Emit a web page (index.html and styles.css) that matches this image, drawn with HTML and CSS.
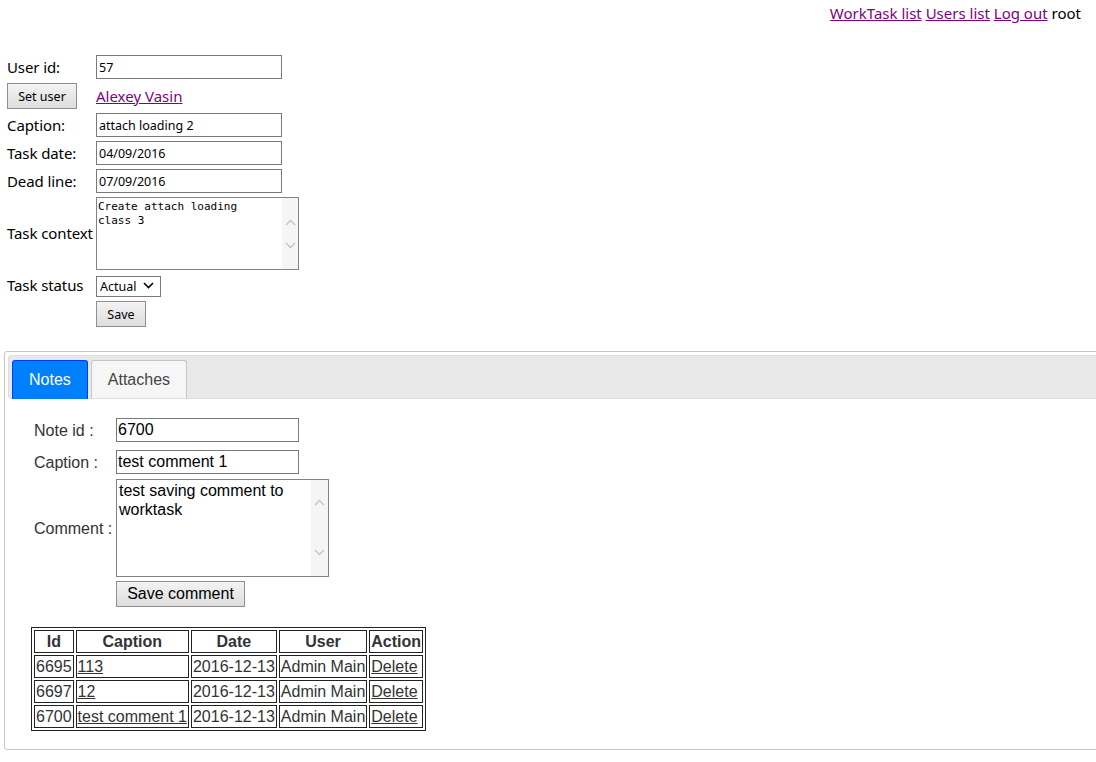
FILE: index.html
```html
<!DOCTYPE html>
<html>
<head>
<meta charset="utf-8">
<title>WorkTask</title>
<link rel="stylesheet" href="styles.css">
</head>
<body>
<div class="topnav"><a href="#">WorkTask list</a> <a href="#">Users list</a> <a href="#">Log out</a> root</div>

<form class="task-form">
  <label class="lbl">User id:</label>
  <input class="txt" type="text" value="57">

  <button type="button" class="btn btn-set">Set user</button>
  <a class="user-link" href="#">Alexey Vasin</a>

  <label class="lbl">Caption:</label>
  <input class="txt" type="text" value="attach loading 2">

  <label class="lbl">Task date:</label>
  <input class="txt" type="text" value="04/09/2016">

  <label class="lbl">Dead line:</label>
  <input class="txt" type="text" value="07/09/2016">

  <label class="lbl">Task context</label>
  <div class="area area-task">
    <textarea class="area-input mono">Create attach loading
class 3</textarea>
    <div class="track">
      <svg width="11" height="7" viewBox="0 0 11 7"><path d="M1 6 L5.5 1.5 L10 6" fill="none" stroke="#c3c3c3" stroke-width="1.3"/></svg>
      <svg width="11" height="7" viewBox="0 0 11 7"><path d="M1 1 L5.5 5.5 L10 1" fill="none" stroke="#c3c3c3" stroke-width="1.3"/></svg>
    </div>
  </div>

  <label class="lbl lbl-status">Task status</label>
  <div class="sel-wrap">
    <select class="sel"><option>Actual</option></select>
    <svg class="sel-arrow" width="11" height="7" viewBox="0 0 11 7"><path d="M1 1 L5.5 5.5 L10 1" fill="none" stroke="#000" stroke-width="1.6"/></svg>
  </div>

  <span></span>
  <button type="button" class="btn btn-save">Save</button>
</form>

<div class="tabs">
  <ul class="tab-nav">
    <li class="tab active"><a href="#">Notes</a></li>
    <li class="tab"><a href="#">Attaches</a></li>
  </ul>
  <div class="tab-panel">
    <div class="note-form">
      <label class="nlbl first">Note id :</label>
      <input class="ntxt first" type="text" value="6700">

      <label class="nlbl">Caption :</label>
      <input class="ntxt" type="text" value="test comment 1">

      <label class="nlbl">Comment :</label>
      <div class="area area-note">
        <textarea class="area-input arial">test saving comment to worktask</textarea>
        <div class="track">
          <svg width="11" height="7" viewBox="0 0 11 7"><path d="M1 6 L5.5 1.5 L10 6" fill="none" stroke="#c3c3c3" stroke-width="1.3"/></svg>
          <svg width="11" height="7" viewBox="0 0 11 7"><path d="M1 1 L5.5 5.5 L10 1" fill="none" stroke="#c3c3c3" stroke-width="1.3"/></svg>
        </div>
      </div>

      <span></span>
      <button type="button" class="btn btn-comment">Save comment</button>
    </div>

    <table class="notes">
      <tr><th>Id</th><th>Caption</th><th>Date</th><th>User</th><th>Action</th></tr>
      <tr><td>6695</td><td><a href="#">113</a></td><td>2016-12-13</td><td>Admin Main</td><td><a href="#">Delete</a></td></tr>
      <tr><td>6697</td><td><a href="#">12</a></td><td>2016-12-13</td><td>Admin Main</td><td><a href="#">Delete</a></td></tr>
      <tr><td>6700</td><td><a href="#">test comment 1</a></td><td>2016-12-13</td><td>Admin Main</td><td><a href="#">Delete</a></td></tr>
    </table>
  </div>
</div>
</body>
</html>
```

FILE: styles.css
```css
html, body {
  overflow: hidden;
}
body {
  margin: 0;
  font-family: "Noto Sans", "Open Sans", sans-serif;
  font-size: 15px;
  color: #000;
  background: #fff;
}
a {
  color: #800080;
}

.topnav {
  text-align: right;
  padding: 3px 15px 0 0;
  line-height: 21px;
  font-size: 15px;
}

.task-form {
  display: grid;
  grid-template-columns: 89px auto;
  justify-content: start;
  align-items: center;
  row-gap: 4px;
  margin: 31px 0 0 7px;
}
.lbl {
  line-height: 21px;
  letter-spacing: -0.1px;
}
.txt {
  box-sizing: border-box;
  width: 186px;
  height: 24px;
  margin: 0;
  padding: 0 2px;
  border: 1px solid #7a7a7a;
  font-family: "Noto Sans", sans-serif;
  font-size: 12.5px;
  color: #000;
}
.user-link {
  line-height: 21px;
}

.btn {
  box-sizing: border-box;
  height: 26px;
  margin: 0;
  padding: 0;
  border: 1px solid #8f8f8f;
  background: linear-gradient(#f3f3f3, #dddddd);
  font-family: "Noto Sans", sans-serif;
  font-size: 12.5px;
  color: #000;
}
.btn-set {
  width: 70px;
  justify-self: start;
}
.btn-save {
  width: 50px;
  justify-self: start;
  margin-top: 1px;
}

.area {
  display: flex;
  box-sizing: border-box;
  border: 1px solid #828282;
  background: #fff;
}
.area-task {
  width: 203px;
  height: 73px;
}
.area-input {
  flex: 1;
  min-width: 0;
  margin: 0;
  border: 0;
  resize: none;
  outline: none;
  overflow: hidden;
  color: #000;
}
.mono {
  font-family: "DejaVu Sans Mono", monospace;
  font-size: 11px;
  line-height: 14px;
  padding: 2px 1px 0;
}
.track {
  width: 16px;
  background: #f5f5f5;
  display: flex;
  flex-direction: column;
  align-items: center;
  justify-content: space-between;
  padding: 21px 0 20px;
}

.lbl-status {
  margin-top: 1px;
}
.sel-wrap {
  position: relative;
  width: 65px;
  height: 21px;
  margin-top: 1px;
}
.sel {
  appearance: none;
  -webkit-appearance: none;
  box-sizing: border-box;
  width: 65px;
  height: 21px;
  margin: 0;
  padding: 0 0 0 3px;
  border: 1px solid #7a7a7a;
  border-radius: 0;
  background: #fff;
  font-family: "Noto Sans", sans-serif;
  font-size: 12.5px;
  color: #000;
}
.sel-arrow {
  position: absolute;
  right: 7px;
  top: 7px;
  pointer-events: none;
}

/* Tabs */
.tabs {
  margin: 24px -40px 0 4px;
  border: 1px solid #c5c5c5;
  border-radius: 3px;
  padding: 3px;
  font-family: "Liberation Sans", Arial, sans-serif;
  font-size: 16px;
  color: #333;
}
.tab-nav {
  display: flex;
  margin: 0;
  padding: 3px 3px 0;
  list-style: none;
  border: 1px solid #dddddd;
  border-radius: 3px;
  background: #e9e9e9;
}
.tab {
  margin: 1px 3px 0 0;
  border: 1px solid #c5c5c5;
  border-bottom: 0;
  border-radius: 3px 3px 0 0;
  background: #f6f6f6;
}
.tab a {
  display: block;
  padding: 8px 16px;
  line-height: 21px;
  color: #454545;
  text-decoration: none;
}
.tab.active {
  background: #007fff;
  border-color: #003eff;
  margin-bottom: -1px;
  padding-bottom: 1px;
}
.tab.active a {
  color: #fff;
}

.tab-panel {
  padding: 19px 22px 15px 26px;
}
.note-form {
  display: grid;
  grid-template-columns: 82px auto;
  justify-content: start;
  align-items: center;
  row-gap: 5px;
}
.nlbl {
  line-height: 19px;
  color: #333;
}
.ntxt {
  box-sizing: border-box;
  width: 183px;
  height: 24px;
  margin: 0;
  padding: 0 1px;
  border: 1px solid #7a7a7a;
  font-family: "Liberation Sans", Arial, sans-serif;
  font-size: 16px;
  color: #000;
}
.ntxt.first, .nlbl.first {
  margin-bottom: 3px;
}
.area-note {
  width: 213px;
  height: 98px;
}
.arial {
  font-family: "Liberation Sans", Arial, sans-serif;
  font-size: 16px;
  line-height: 19px;
  padding: 1px 2px;
}
.area-note .track {
  width: 17px;
  padding: 19px 0 20px;
}
.btn-comment {
  width: 129px;
  justify-self: start;
  margin-top: -1px;
  font-family: "Liberation Sans", Arial, sans-serif;
  font-size: 16px;
}

.notes {
  margin: 20px 0 0 -3px;
  border: 1px solid #222;
  border-spacing: 2px;
  color: #333;
}
.notes th, .notes td {
  border: 1px solid #222;
  padding: 1px;
  line-height: 19px;
  white-space: nowrap;
}
.notes th {
  font-weight: bold;
}
.notes a {
  color: #333;
}
```
